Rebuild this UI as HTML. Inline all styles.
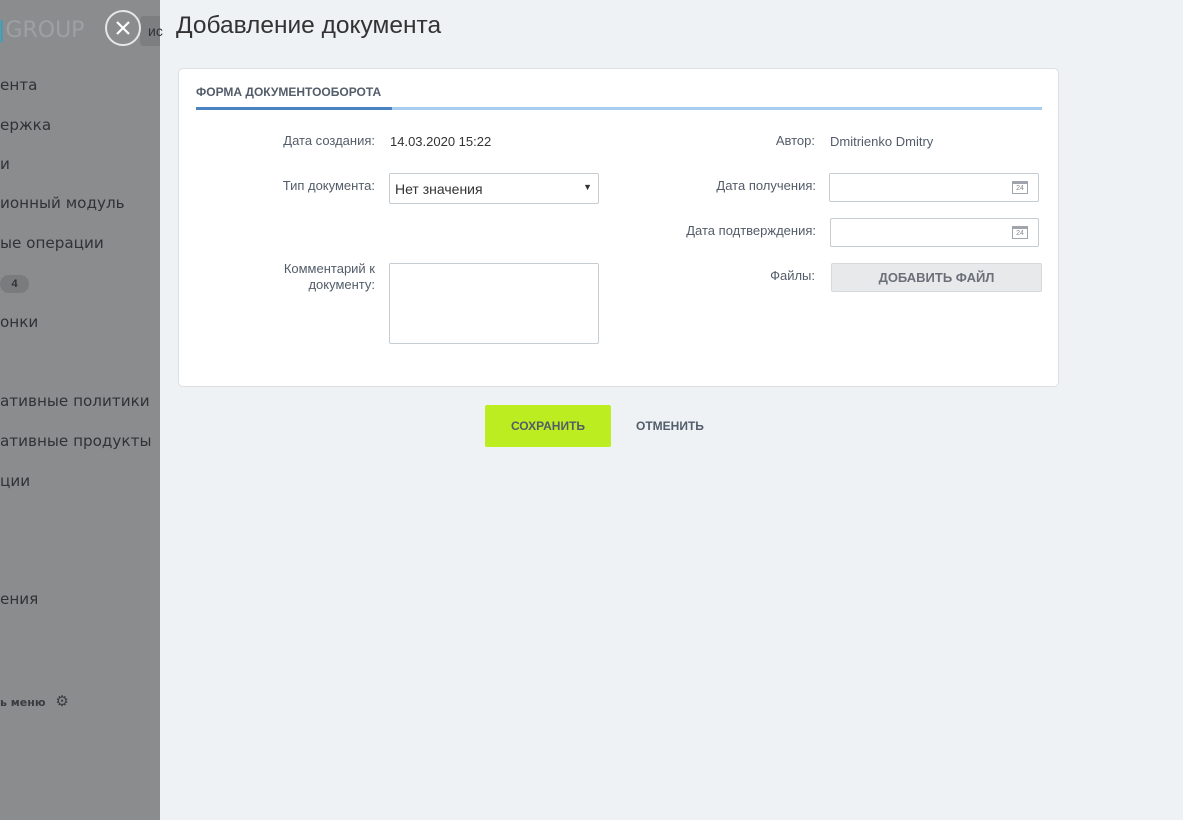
<!DOCTYPE html><html><head><meta charset="utf-8"><style>
body{margin:0;width:1183px;height:820px;overflow:hidden;font-family:"Liberation Sans",sans-serif;background:#eef2f4;position:relative}
.left{position:absolute;left:0;top:0;width:160px;height:820px;background:#8b8c8e;overflow:hidden}
.mi{position:absolute;left:0;font-family:"DejaVu Sans",sans-serif;font-size:15.2px;color:#303236;white-space:nowrap}
.a{position:absolute}
.lbl{position:absolute;font-size:13px;color:#535c69;text-align:right}
.inp{position:absolute;background:#fff;border:1px solid #c6cdd3;border-radius:2px;box-sizing:border-box}
.cal{position:absolute;right:10px;top:7px;width:16px;height:13px;border:1px solid #a0a5ab;border-top-width:3px;box-sizing:border-box;font-size:7px;color:#888;text-align:center;line-height:9px}
</style></head><body>
<div class="left">
<div class="mi" style="top:18px;left:-2px;font-size:22px;color:#9da0a4"><span style="color:#2aa5c0">|</span>GROUP</div>
<div class="a" style="left:140px;top:16px;width:30px;height:30px;background:#7d7e80;border-radius:4px"></div>
<div class="mi" style="top:76px">ента</div>
<div class="mi" style="top:116px">ержка</div>
<div class="mi" style="top:155px">и</div>
<div class="mi" style="top:194px">ионный модуль</div>
<div class="mi" style="top:234px">ые операции</div>
<div class="a" style="left:0;top:275px;width:29px;height:18px;background:#7a7b7d;border-radius:9px;font-size:11px;color:#303236;text-align:center;line-height:18px;font-weight:bold">4</div>
<div class="mi" style="top:313px">онки</div>
<div class="mi" style="top:392px">ативные политики</div>
<div class="mi" style="top:432px">ативные продукты</div>
<div class="mi" style="top:472px">ции</div>
<div class="mi" style="top:590px">ения</div>
<div class="mi" style="top:692px;font-size:11px;font-weight:bold;color:#3a3c40">ь меню <span style="margin-left:6px;font-size:15px;font-weight:normal">⚙</span></div>
</div>
<div class="a" style="left:148px;top:23px;font-size:14px;color:#303236">ис</div>
<div class="a" style="left:105px;top:10px;width:36px;height:36px;border:2px solid #e6e6e6;border-radius:50%;box-sizing:border-box;background:#8b8c8e"><svg width="32" height="32" viewBox="0 0 32 32"><path d="M10 10L22 22M22 10L10 22" stroke="#fff" stroke-width="2.2"/></svg></div>
<div class="a" style="left:176px;top:12px;font-size:24.5px;color:#333">Добавление документа</div>
<div class="a" style="left:178px;top:68px;width:881px;height:319px;background:#fff;border:1px solid #dce0e3;border-radius:5px;box-sizing:border-box"></div>
<div class="a" style="left:196px;top:85px;font-size:12px;font-weight:bold;color:#535c69">ФОРМА ДОКУМЕНТООБОРОТА</div>
<div class="a" style="left:196px;top:107px;width:846px;height:3px;background:#a9cdef"></div>
<div class="a" style="left:196px;top:107px;width:196px;height:3px;background:#4b82c2"></div>
<div class="lbl" style="right:808px;top:133px">Дата создания:</div>
<div class="a" style="left:390px;top:134px;font-size:13px;color:#333">14.03.2020 15:22</div>
<div class="lbl" style="right:808px;top:178px">Тип документа:</div>
<div class="inp" style="left:389px;top:173px;width:210px;height:31px"><span style="position:absolute;left:5px;top:7px;font-size:14px;color:#333">Нет значения</span><span style="position:absolute;right:6px;top:8px;font-size:9px;color:#333">▼</span></div>
<div class="lbl" style="right:808px;top:261px;line-height:16px">Комментарий к<br>документу:</div>
<div class="inp" style="left:389px;top:263px;width:210px;height:81px"></div>
<div class="lbl" style="right:368px;top:133px">Автор:</div>
<div class="a" style="left:830px;top:134px;font-size:13px;color:#535c69">Dmitrienko Dmitry</div>
<div class="lbl" style="right:367px;top:178px">Дата получения:</div>
<div class="inp" style="left:829px;top:173px;width:210px;height:29px"><div class="cal">24</div></div>
<div class="lbl" style="right:367px;top:223px">Дата подтверждения:</div>
<div class="inp" style="left:830px;top:218px;width:209px;height:29px"><div class="cal">24</div></div>
<div class="lbl" style="right:368px;top:268px">Файлы:</div>
<div class="a" style="left:831px;top:263px;width:211px;height:29px;background:#e8e9eb;border:1px solid #d6d9dc;box-sizing:border-box;border-radius:2px;font-size:13px;font-weight:bold;color:#6b7079;text-align:center;line-height:27px">ДОБАВИТЬ ФАЙЛ</div>
<div class="a" style="left:485px;top:405px;width:126px;height:42px;background:#bbed21;border-radius:2px;font-size:12px;font-weight:bold;color:#535c69;text-align:center;line-height:42px">СОХРАНИТЬ</div>
<div class="a" style="left:636px;top:419px;font-size:12px;font-weight:bold;color:#535c69">ОТМЕНИТЬ</div>
</body></html>
